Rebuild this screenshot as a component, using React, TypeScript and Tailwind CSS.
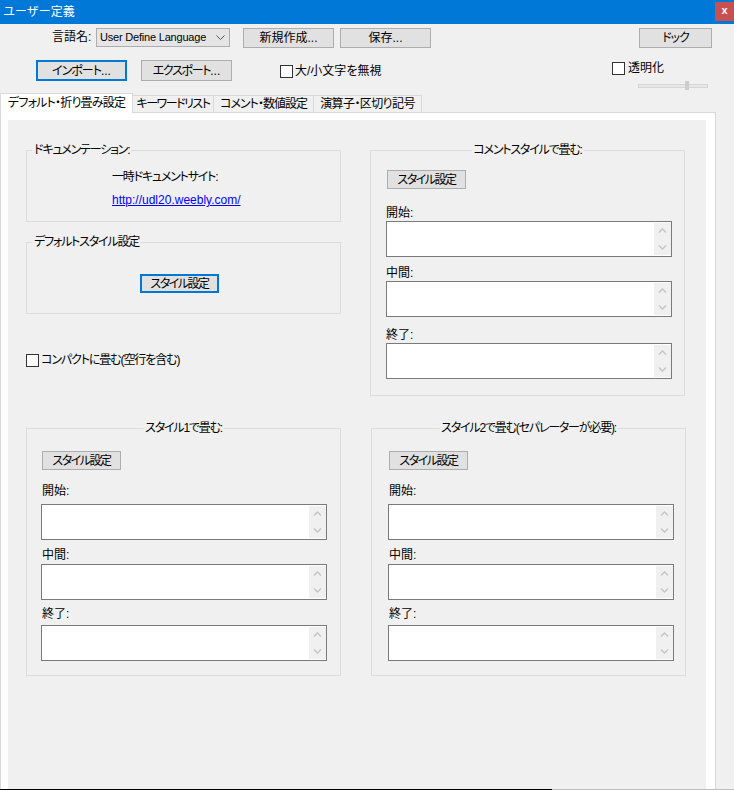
import React from "react";

function Chevron({ up }: { up?: boolean }) {
  return (
    <svg width="9" height="5" viewBox="0 0 9 5" className="block">
      <polyline
        points={up ? "1,4.5 4.5,1 8,4.5" : "1,0.5 4.5,4 8,0.5"}
        fill="none"
        stroke="#c4c4c4"
        strokeWidth="1.3"
      />
    </svg>
  );
}

function Memo() {
  return (
    <div className="flex h-[36px] w-[286px] border border-[#7a7a7a] bg-white">
      <div className="flex-1" />
      <div className="my-[1px] flex w-[17px] flex-col items-center justify-between bg-[#f0f0f0] py-[5px]">
        <Chevron up />
        <Chevron />
      </div>
    </div>
  );
}

function Btn({
  children,
  focus,
  className = "",
}: {
  children: React.ReactNode;
  focus?: boolean;
  className?: string;
}) {
  return (
    <div
      className={
        (focus
          ? "border-2 border-[#0078d7] "
          : "border border-[#adadad] ") +
        "flex items-center justify-center bg-[#e1e1e1] leading-none " +
        className
      }
    >
      {children}
    </div>
  );
}

function Check() {
  return <span className="block h-[13px] w-[13px] shrink-0 border border-[#333333] bg-white" />;
}

function Legend({ children, center }: { children: React.ReactNode; center?: boolean }) {
  return (
    <span
      className={
        "absolute -top-[8px] whitespace-nowrap bg-[#f0f0f0] px-[2px] leading-[14px] tracking-[-1.2px] " +
        (center ? "left-1/2 -translate-x-1/2" : "left-[5px]")
      }
    >
      {children}
    </span>
  );
}

function FoldGroup({
  title,
  className = "",
  padClass,
}: {
  title: string;
  className?: string;
  padClass: string;
}) {
  return (
    <div className={"relative h-[248px] w-[315px] border border-[#dcdcdc] " + className}>
      <Legend center>{title}</Legend>
      <div className={"flex flex-col pt-[22px] " + padClass}>
        <Btn className="ml-[1px] h-[19px] w-[79px] tracking-[-1.5px]">スタイル設定</Btn>
        <div className="mt-[13px] ml-[1px] h-[16px] leading-[16px]">開始:</div>
        <div className="mt-[5px]">
          <Memo />
        </div>
        <div className="mt-[7px] ml-[1px] h-[16px] leading-[16px]">中間:</div>
        <div className="mt-[1px]">
          <Memo />
        </div>
        <div className="mt-[6px] ml-[1px] h-[16px] leading-[16px]">終了:</div>
        <div className="mt-[3px]">
          <Memo />
        </div>
      </div>
    </div>
  );
}

export default function App() {
  return (
    <div className="flex h-[790px] w-[734px] flex-col overflow-hidden whitespace-nowrap bg-[#f0f0f0] text-[12px] text-black font-['Liberation_Sans','Noto_Sans_CJK_JP',sans-serif] [font-feature-settings:'palt']">
      {/* Title bar */}
      <div className="flex h-[24px] shrink-0 items-start justify-between bg-[#0078d7]">
        <div className="pl-[3px] pt-[4px] text-[12px] leading-[16px] text-white [font-feature-settings:normal]">
          ユーザー定義
        </div>
        <div className="mt-[2px] flex h-[19px] w-[19px] items-center justify-center bg-[#c75050] pb-[2px] text-[11px] font-bold text-white">
          x
        </div>
      </div>

      {/* Row 1 */}
      <div className="mt-[4px] flex h-[20px] shrink-0 items-start pl-[52px]">
        <div className="w-[44px] leading-[19px]">言語名:</div>
        <div className="flex h-[19px] w-[134px] items-center justify-between border border-[#adadad] bg-[#e5e5e5] pl-[3px] pr-[4px]">
          <span className="text-[11px] leading-none tracking-[-0.2px]">User Define Language</span>
          <svg width="9" height="5" viewBox="0 0 9 5">
            <polyline points="0.5,0.5 4.5,4.5 8.5,0.5" fill="none" stroke="#555" strokeWidth="1" />
          </svg>
        </div>
        <Btn className="ml-[13px] h-[20px] w-[91px]">新規作成...</Btn>
        <Btn className="ml-[6px] h-[20px] w-[91px]">保存...</Btn>
        <Btn className="ml-[208px] h-[20px] w-[73px] tracking-[-1px]">ドック</Btn>
      </div>

      {/* Row 2 */}
      <div className="mt-[12px] flex h-[33px] shrink-0 items-start pl-[36px]">
        <Btn focus className="h-[21px] w-[91px]">
          <span className="tracking-[-1px]">インポート</span>
          <span>...</span>
        </Btn>
        <Btn className="ml-[14px] h-[21px] w-[91px]">
          <span className="tracking-[-1.3px]">エクスポート</span>
          <span>...</span>
        </Btn>
        <div className="ml-[48px] mt-[5px] flex items-center gap-[2px]">
          <Check />
          <span className="leading-[13px]">大/小文字を無視</span>
        </div>
        <div className="ml-auto mr-[26px] mt-[2px] flex w-[96px] flex-col">
          <div className="flex items-center gap-[3px]">
            <Check />
            <span className="leading-[13px]">透明化</span>
          </div>
          <div className="relative ml-[26px] mt-[6px] h-[9px] w-[70px]">
            <div className="absolute left-0 right-0 top-[3px] h-[4px] border border-[#d6d6d6] bg-[#e7e7e7]" />
            <div className="absolute left-[47px] top-0 h-[9px] w-[4px] bg-[#cdcdcd]" />
          </div>
        </div>
      </div>

      {/* Tabs */}
      <div className="relative z-10 flex h-[19px] shrink-0 items-end">
        <div className="-mb-[1px] flex h-[20px] w-[133px] items-center justify-center border-x border-t border-[#d9d9d9] bg-white pb-[1px] tracking-[-0.8px]">
          デフォルト・折り畳み設定
        </div>
        <div className="flex h-[17px] w-[81px] items-center justify-center border-r border-t border-[#d9d9d9] bg-[#f0f0f0] tracking-[-1.5px]">
          キーワードリスト
        </div>
        <div className="flex h-[17px] w-[100px] items-center justify-center border-r border-t border-[#d9d9d9] bg-[#f0f0f0] tracking-[-1px]">
          コメント・数値設定
        </div>
        <div className="flex h-[17px] w-[108px] items-center justify-center border-r border-t border-[#d9d9d9] bg-[#f0f0f0] tracking-[-0.6px]">
          演算子・区切り記号
        </div>
      </div>

      {/* Tab panel */}
      <div className="flex min-h-0 w-[716px] flex-1 flex-col border-x border-t border-[#d9d9d9] bg-white pl-[7px] pr-[9px] pt-[7px]">
        <div className="flex flex-1 flex-col bg-[#f0f0f0] pl-[18px] pt-[30px]">
          {/* Top section */}
          <div className="flex items-start">
            <div className="flex w-[315px] flex-col">
              <div className="relative h-[72px] w-[315px] border border-[#dcdcdc]">
                <Legend>ドキュメンテーション:</Legend>
                <div className="pl-[85px] pt-[18px]">
                  <div className="h-[16px] leading-[16px] tracking-[-1.2px]">一時ドキュメントサイト:</div>
                  <div className="mt-[7px] h-[16px] leading-[16px] text-[#0000ff] underline">
                    http://udl20.weebly.com/
                  </div>
                </div>
              </div>
              <div className="relative mt-[20px] h-[72px] w-[315px] border border-[#dcdcdc]">
                <Legend>デフォルトスタイル設定</Legend>
                <div className="pl-[113px] pt-[31px]">
                  <Btn focus className="h-[19px] w-[79px] tracking-[-1.5px]">
                    スタイル設定
                  </Btn>
                </div>
              </div>
              <div className="mt-[40px] flex items-center gap-[2px]">
                <Check />
                <span className="leading-[13px] tracking-[-1.1px]">コンパクトに畳む(空行を含む)</span>
              </div>
            </div>

            <div className="relative ml-[29px] h-[246px] w-[315px] border border-[#dcdcdc]">
              <Legend center>コメントスタイルで畳む:</Legend>
              <div className="flex flex-col pl-[15px] pt-[19px]">
                <Btn className="ml-[1px] h-[19px] w-[79px] tracking-[-1.5px]">スタイル設定</Btn>
                <div className="mt-[16px] h-[16px] leading-[16px]">開始:</div>
                <Memo />
                <div className="mt-[8px] h-[16px] leading-[16px]">中間:</div>
                <Memo />
                <div className="mt-[10px] h-[16px] leading-[16px]">終了:</div>
                <Memo />
              </div>
            </div>
          </div>

          {/* Bottom section */}
          <div className="mt-[32px] flex items-start">
            <FoldGroup title="スタイル1で畳む:" padClass="pl-[14px]" />
            <FoldGroup title="スタイル2で畳む(セパレーターが必要):" padClass="pl-[16px]" className="ml-[30px]" />
          </div>
        </div>
      </div>

      {/* bottom edge line */}
      <div className="flex h-[1px] shrink-0">
        <div className="w-[552px] bg-black" />
        <div className="flex-1 bg-[#bdbdbd]" />
      </div>
    </div>
  );
}
